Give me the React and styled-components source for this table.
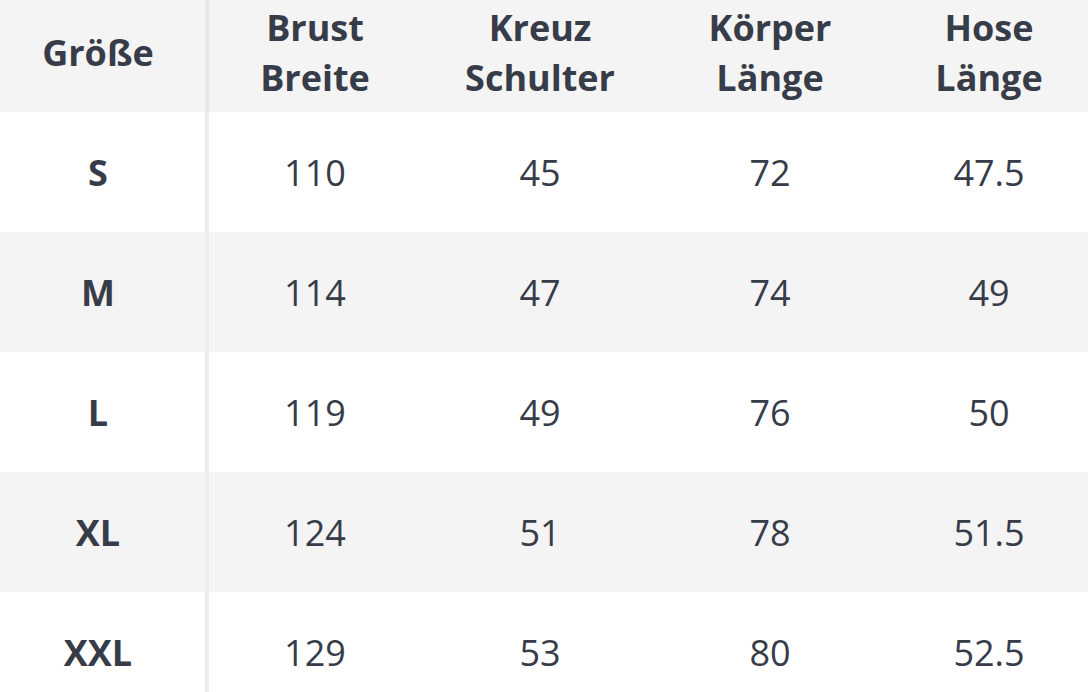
import React from 'react'
import styled, {createGlobalStyle} from 'styled-components'

const GlobalStyle = createGlobalStyle`
  html, body {
    margin: 0;
    padding: 0;
    background: #ffffff;
    overflow: hidden;
  }
  body {
    font-family: "Open Sans", "DejaVu Sans", sans-serif;
    color: #373c49;
  }
`

const headers = [
  ['Größe'],
  ['Brust', 'Breite'],
  ['Kreuz', 'Schulter'],
  ['Körper', 'Länge'],
  ['Hose', 'Länge'],
]

const rows = [
  ['S', '110', '45', '72', '47.5'],
  ['M', '114', '47', '74', '49'],
  ['L', '119', '49', '76', '50'],
  ['XL', '124', '51', '78', '51.5'],
  ['XXL', '129', '53', '80', '52.5'],
]

const App = () => {
  return (
    <>
      <GlobalStyle />
      <Table>
        <Row shaded>
          {headers.map((lines, i) => (
            <HeadCell key={i} first={i === 0}>
              {lines.map((l, j) => (
                <span key={j}>{l}</span>
              ))}
            </HeadCell>
          ))}
        </Row>
        {rows.map((r, i) => (
          <Row key={r[0]} shaded={i % 2 === 1}>
            {r.map((v, j) => (
              <Cell key={j} first={j === 0}>
                {v}
              </Cell>
            ))}
          </Row>
        ))}
      </Table>
    </>
  )
}

export default App

const Table = styled.div`
  display: flex;
  flex-direction: column;
  width: 1097px;
`

const Row = styled.div`
  display: grid;
  grid-template-columns: 209px 212px 238px 222px 216px;
  background: ${(p) => (p.shaded ? '#f4f4f4' : '#ffffff')};
`

const BaseCell = styled.div`
  display: flex;
  flex-direction: column;
  align-items: center;
  justify-content: center;
  box-sizing: border-box;
  font-size: 36px;
  line-height: 50px;
  ${(p) =>
    p.first &&
    `
    border-right: 4px solid #e8e8e8;
    padding-right: 9px;
    background: inherit;
  `}
`

const HeadCell = styled(BaseCell)`
  height: 112px;
  padding-bottom: 6px;
  font-weight: 700;
`

const Cell = styled(BaseCell)`
  height: 120px;
  padding-top: 2px;
  font-weight: ${(p) => (p.first ? 700 : 400)};
  ${(p) => p.first && 'border-right-color: #ececec;'}
`
